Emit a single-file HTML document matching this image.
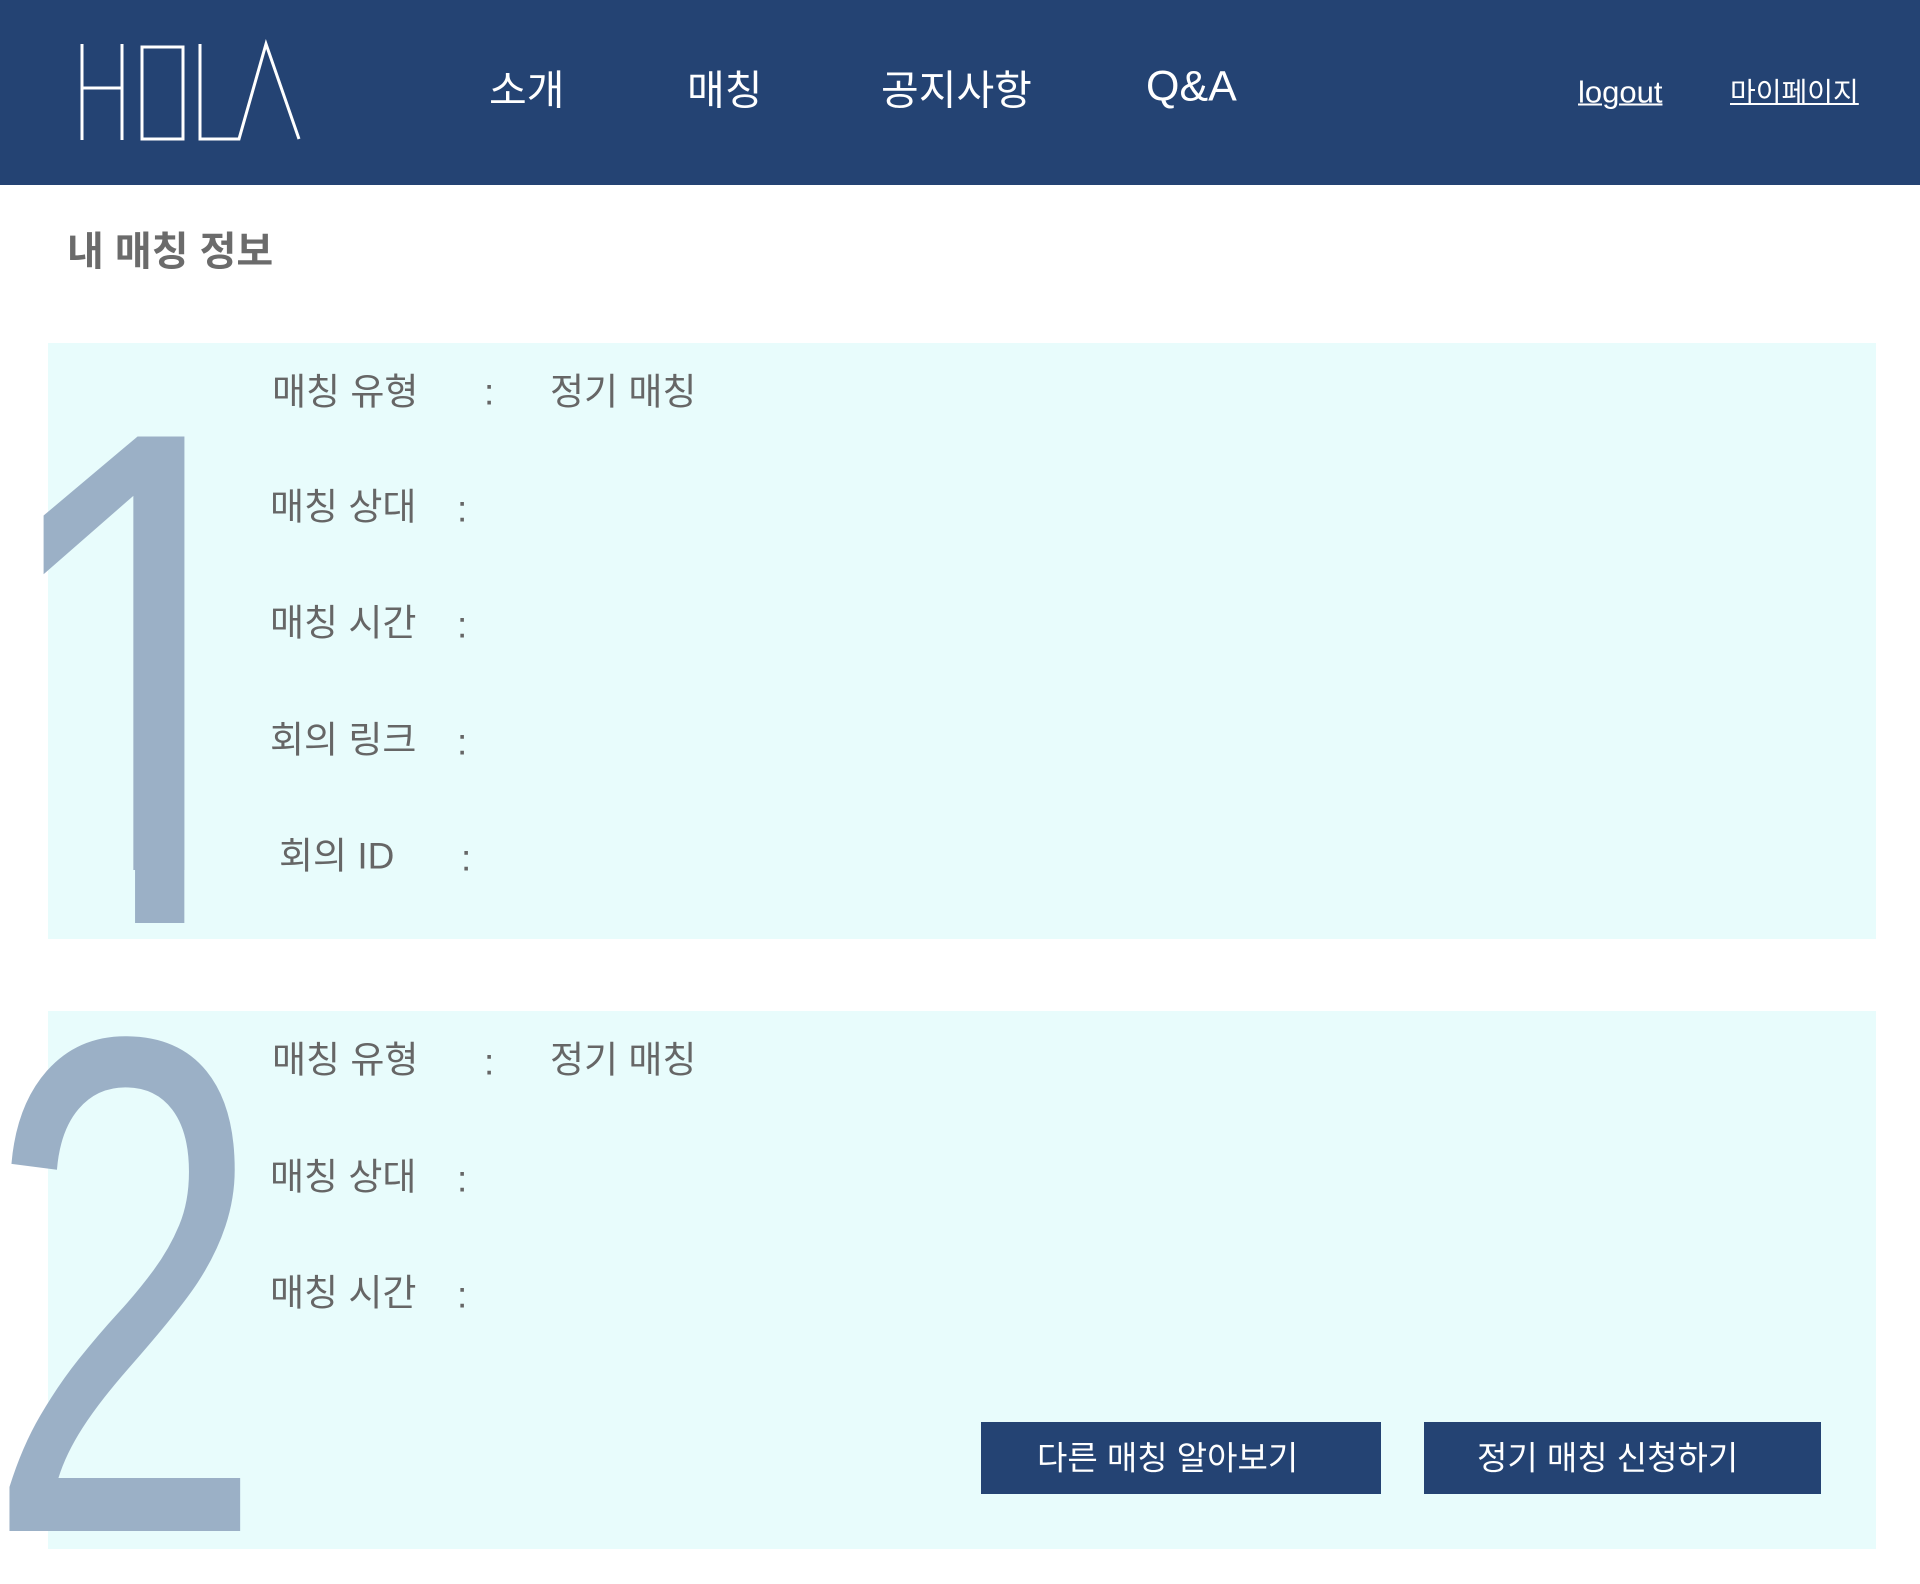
<!DOCTYPE html>
<html><head><meta charset="utf-8">
<style>
*{margin:0;padding:0;box-sizing:border-box}
html,body{width:1920px;height:1584px;background:#fff;overflow:hidden;position:relative;font-family:"Liberation Sans","Noto Sans CJK KR",sans-serif}
.hdr{position:absolute;left:0;top:0;width:1920px;height:185px;background:#244373}
.t{position:absolute;white-space:nowrap;line-height:1;transform:translateY(-50%)}
.nav{color:#fff;font-size:41px}
.link{color:#fff;text-decoration:underline;text-decoration-thickness:2px}
.panel{position:absolute;left:48px;width:1828px;background:#e8fcfc}
.lb{color:#666;font-size:37px}
.btn{position:absolute;height:72px;background:#244373;top:1422px}
.btn span{position:absolute;top:50%;transform:translateY(-50%);color:#fff;font-size:33px;white-space:nowrap;line-height:1}
</style></head><body>
<div class="hdr">
<svg width="320" height="185" style="position:absolute;left:0;top:0" fill="none" stroke="#fff" stroke-width="3">
<path d="M82 44V140M122 44V140M82 88H122"/>
<rect x="142" y="47" width="41" height="92"/>
<path d="M200 44V139H239L266 44L299 139"/>
</svg>
<div class="t nav" style="left:489px;top:91px">소개</div>
<div class="t nav" style="left:687px;top:91px">매칭</div>
<div class="t nav" style="left:881px;top:91px">공지사항</div>
<div class="t nav" style="left:1146px;top:87px;font-size:43px">Q&amp;A</div>
<div class="t link" style="left:1578px;top:92px;font-size:31px">logout</div>
<div class="t link" style="left:1730px;top:93px;font-size:28px">마이페이지</div>
</div>
<div class="t" style="left:67px;top:252px;font-size:40px;font-weight:bold;color:#6b6b6b">내 매칭 정보</div>

<div class="panel" style="top:343px;height:596px"></div>
<div class="panel" style="top:1011px;height:538px"></div>

<svg width="300" height="1584" style="position:absolute;left:0;top:0;overflow:hidden">
<defs>
<clipPath id="c1" clipPathUnits="userSpaceOnUse">
<rect x="-200" y="-800" width="800" height="749"/>
<rect x="173" y="-60" width="58" height="70"/>
</clipPath>
</defs>
<g transform="translate(-12,923) scale(0.85,1.04)">
<text x="0" y="0" font-family="Liberation Sans" font-size="680" fill="#9bb0c6" clip-path="url(#c1)">1</text>
</g>
<g transform="translate(-16,1531) scale(0.736,1.03)">
<text x="0" y="0" font-family="Liberation Sans" font-size="688" fill="#9bb0c6">2</text>
</g>
</svg>

<div class="t lb" style="left:272px;top:392px">매칭 유형</div>
<div class="t lb" style="left:484px;top:392px">:</div>
<div class="t lb" style="left:550px;top:392px">정기 매칭</div>
<div class="t lb" style="left:270px;top:507px">매칭 상대</div>
<div class="t lb" style="left:457px;top:509px">:</div>
<div class="t lb" style="left:270px;top:623px">매칭 시간</div>
<div class="t lb" style="left:457px;top:625px">:</div>
<div class="t lb" style="left:270px;top:740px">회의 링크</div>
<div class="t lb" style="left:457px;top:742px">:</div>
<div class="t lb" style="left:279px;top:856px">회의 ID</div>
<div class="t lb" style="left:461px;top:858px">:</div>

<div class="t lb" style="left:272px;top:1060px">매칭 유형</div>
<div class="t lb" style="left:484px;top:1062px">:</div>
<div class="t lb" style="left:550px;top:1060px">정기 매칭</div>
<div class="t lb" style="left:270px;top:1177px">매칭 상대</div>
<div class="t lb" style="left:457px;top:1179px">:</div>
<div class="t lb" style="left:270px;top:1293px">매칭 시간</div>
<div class="t lb" style="left:457px;top:1295px">:</div>

<div class="btn" style="left:981px;width:400px"><span style="left:56px">다른 매칭 알아보기</span></div>
<div class="btn" style="left:1424px;width:397px"><span style="left:53px">정기 매칭 신청하기</span></div>
</body></html>
